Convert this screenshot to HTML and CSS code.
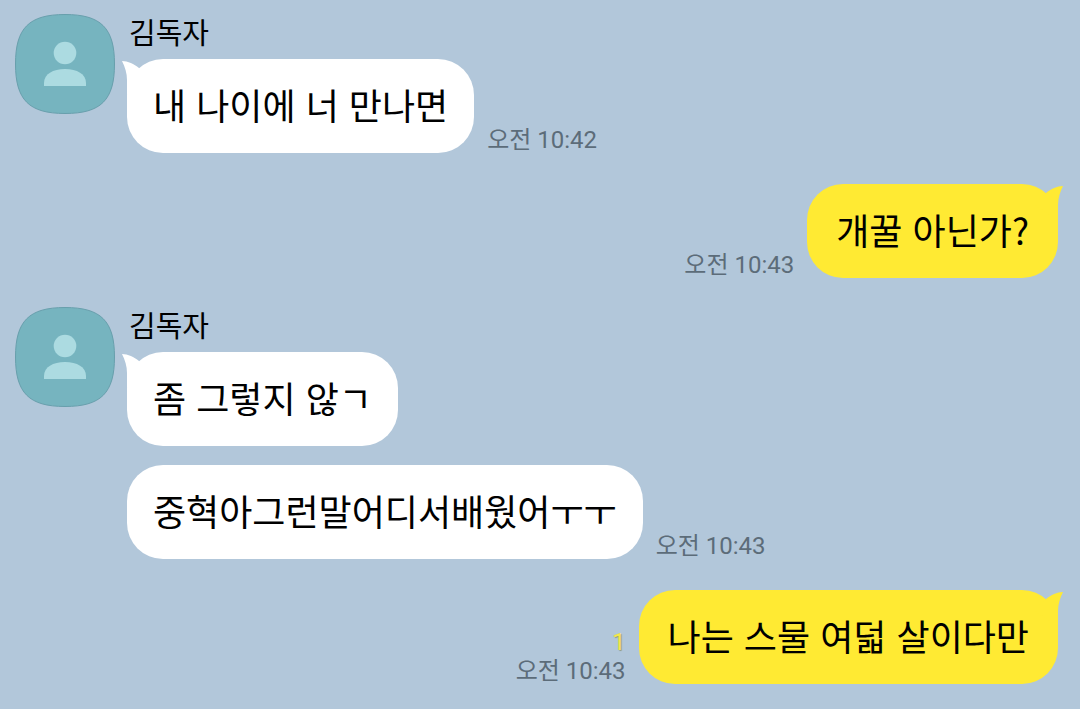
FILE: index.html
```html
<!DOCTYPE html>
<html lang="ko">
<head>
    <meta charset="UTF-8">
    <meta name="viewport" content="width=device-width, initial-scale=1.0">
    <title>김독자</title>
    <link rel="stylesheet" href="styles.css">
</head>
<body>
    <main class="chat">
        <section class="received">
            <svg class="avatar" viewBox="0 0 100 100" aria-hidden="true">
                <path class="avatar-bg" d="M50 .5C86 .5 99.500 14 99.500 50S86 99.500 50 99.500.5 86 .5 50 14 .5 50 .5Z"/>
                <circle class="avatar-person" cx="50" cy="39" r="11.300"/>
                <path class="avatar-person" d="M29 72V69C29 60 38 55 50 55S71 60 71 69V72Z"/>
            </svg>
            <div class="messages">
                <div class="name">김독자</div>
                <div class="row">
                    <div class="bubble">
                        <svg class="tail" viewBox="0 0 30 36" aria-hidden="true"><path d="M0 2C6 2 12 5 17 9L30 20 5 36V21C5 14 3 8 0 2Z"/></svg>
                        내 나이에 너 만나면
                    </div>
                    <time class="time">오전 10:42</time>
                </div>
            </div>
        </section>

        <section class="sent">
            <div class="info">
                <time class="time">오전 10:43</time>
            </div>
            <div class="bubble">
                <svg class="tail" viewBox="0 0 30 36" aria-hidden="true"><path d="M0 2C6 2 12 5 17 9L30 20 5 36V21C5 14 3 8 0 2Z"/></svg>
                개꿀 아닌가?
            </div>
        </section>

        <section class="received">
            <svg class="avatar" viewBox="0 0 100 100" aria-hidden="true">
                <path class="avatar-bg" d="M50 .5C86 .5 99.500 14 99.500 50S86 99.500 50 99.500.5 86 .5 50 14 .5 50 .5Z"/>
                <circle class="avatar-person" cx="50" cy="39" r="11.300"/>
                <path class="avatar-person" d="M29 72V69C29 60 38 55 50 55S71 60 71 69V72Z"/>
            </svg>
            <div class="messages">
                <div class="name">김독자</div>
                <div class="row">
                    <div class="bubble">
                        <svg class="tail" viewBox="0 0 30 36" aria-hidden="true"><path d="M0 2C6 2 12 5 17 9L30 20 5 36V21C5 14 3 8 0 2Z"/></svg>
                        좀 그렇지 않ㄱ
                    </div>
                </div>
                <div class="row">
                    <div class="bubble">중혁아그런말어디서배웠어ㅜㅜ</div>
                    <time class="time">오전 10:43</time>
                </div>
            </div>
        </section>

        <section class="sent">
            <div class="info">
                <span class="unread">1</span>
                <time class="time">오전 10:43</time>
            </div>
            <div class="bubble">
                <svg class="tail" viewBox="0 0 30 36" aria-hidden="true"><path d="M0 2C6 2 12 5 17 9L30 20 5 36V21C5 14 3 8 0 2Z"/></svg>
                나는 스물 여덟 살이다만
            </div>
        </section>
    </main>
</body>
</html>
```
FILE: styles.css
```css
body {
    margin: 0;
    background-color: #b2c7da;
    font-family: "Noto Sans CJK KR", sans-serif;
    color: #000;
}

.chat {
    display: flex;
    flex-direction: column;
    gap: 29px;
    padding: 14px 22px 24px 15px;
}

.received {
    display: flex;
    align-items: flex-start;
    gap: 12px;
}

.avatar {
    flex: none;
    width: 100px;
    height: 100px;
}

.avatar-bg {
    fill: #76b4bf;
    stroke: #689fac;
}

.avatar-person {
    fill: #acdbe1;
}

.messages {
    display: flex;
    flex-direction: column;
    gap: 19px;
}

.name {
    margin-bottom: -8px;
    padding-left: 2px;
    font-size: 29px;
    line-height: 34px;
}

.row {
    display: flex;
    align-items: flex-end;
    gap: 13px;
}

.bubble {
    position: relative;
    padding: 18px 26px 22px;
    border-radius: 36px;
    background-color: #fff;
    font-size: 36px;
    line-height: 54px;
}

.tail {
    position: absolute;
    top: 0;
    left: -5px;
    width: 30px;
    height: 36px;
    fill: #fff;
}

.time {
    color: #5c6c79;
    font-family: Roboto, "Noto Sans CJK KR", sans-serif;
    font-size: 24px;
    line-height: 26px;
}

.sent {
    display: flex;
    justify-content: flex-end;
    align-items: flex-end;
    gap: 13px;
    margin-top: 2px;
}

.sent .bubble {
    padding: 18px 29px 22px;
    background-color: #ffea33;
}

.sent .tail {
    left: auto;
    right: -5px;
    transform: scaleX(-1);
    fill: #ffea33;
}

.info {
    display: flex;
    flex-direction: column;
    align-items: flex-end;
}

.unread {
    color: #f4e74c;
    font-family: Roboto, sans-serif;
    font-size: 24px;
    line-height: 32px;
    text-shadow: 1px 1px 1px #8f9a80;
}
```
